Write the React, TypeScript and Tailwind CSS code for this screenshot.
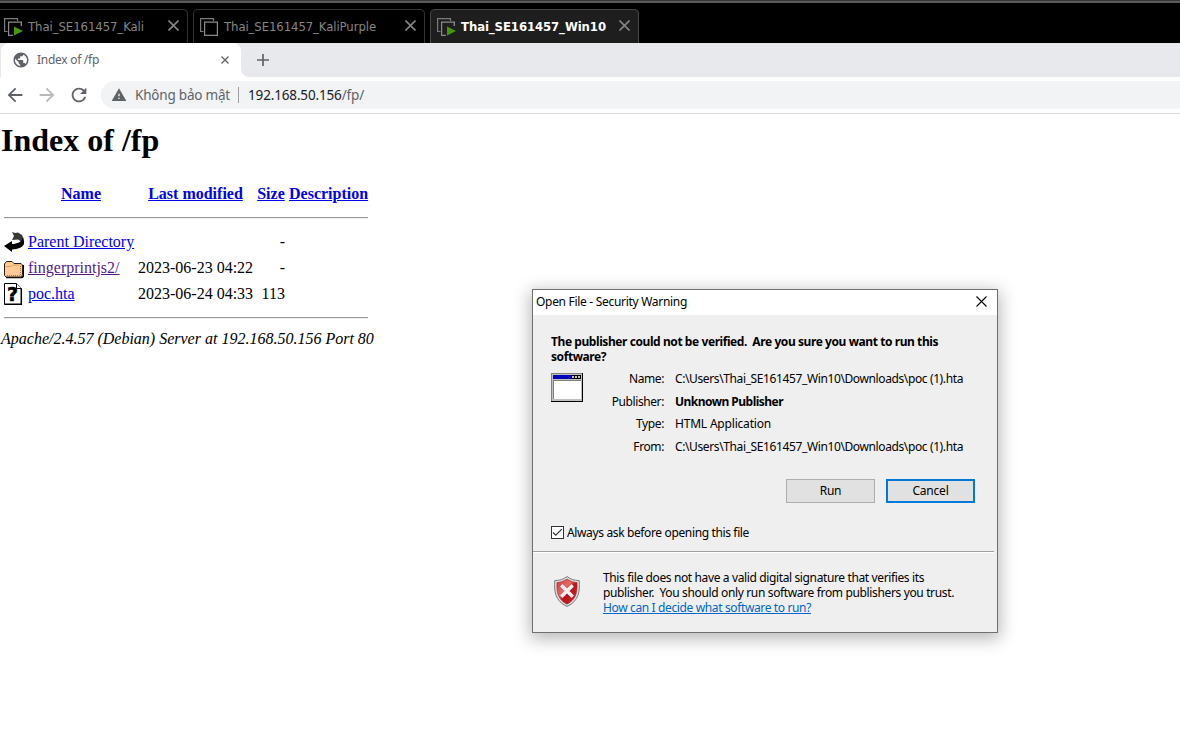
import type { ReactNode } from "react";
import { MdArrowBack, MdArrowForward, MdPublic, MdRefresh, MdWarning } from "react-icons/md";

function Cross({ className, size, stroke = 1.5 }: { className?: string; size: number; stroke?: number }) {
  return (
    <svg width={size} height={size} viewBox={`0 0 ${size} ${size}`} className={className}>
      <path d={`M0.5 0.5L${size - 0.5} ${size - 0.5}M${size - 0.5} 0.5L0.5 ${size - 0.5}`} stroke="currentColor" strokeWidth={stroke} fill="none" />
    </svg>
  );
}

function VmIcon({ running, active }: { running?: boolean; active?: boolean }) {
  const back = active ? "#1e1e1e" : "#000";
  return (
    <svg width="20" height="18" viewBox="0 0 20 18" className="shrink-0">
      <path d="M3.5 13.5H0.6V0.6H13.5V3" fill="none" stroke="#7a7a7a" strokeWidth="1.2" />
      <path d="M4.6 4.1H17.4V17.4H4.6Z" fill={back} stroke="#8a8a8a" strokeWidth="1.2" />
      {running && (
        <>
          <path d="M9 8H20V18H9Z" fill={back} />
          <path d="M17.4 4.1V8" stroke="#8a8a8a" strokeWidth="1.2" />
          <path d="M10 8.500L19 13L10 17.500Z" fill="#48960c" />
        </>
      )}
    </svg>
  );
}

function VmTab({ className, label, running, active, labelClass }: { className: string; label: string; running?: boolean; active?: boolean; labelClass: string }) {
  return (
    <div className={`flex h-[34px] shrink-0 items-center border-t border-r ${className}`}>
      <VmIcon running={running} active={active} />
      <span className={`ml-1 grow whitespace-pre ${labelClass}`}>{label}</span>
      <Cross size={11} className="mr-2 mb-[2px] shrink-0 text-[#858585]" stroke={1.6} />
    </div>
  );
}

function BackIcon() {
  return (
    <svg width="20" height="22" viewBox="0 0 20 22">
      <path d="M8 1L11 2L14 1.5L18 4L19.5 8L18 11L14 8.5L8 9L10 5Z" fill="#383838" />
      <path d="M0 15L8 10V13C13 13 18 11 19 6L20 10V13C18 17 14 18 8 18.5V21Z" fill="#000" />
    </svg>
  );
}

function FolderIcon() {
  return (
    <svg width="20" height="22" viewBox="0 0 20 22">
      <path d="M2 20.5H18L19.5 19V8" fill="none" stroke="#000" strokeWidth="1.6" />
      <path d="M0.5 7L2.5 4.5H8L10 6.5H17L18.5 8V18L17 20H2L0.5 18.5Z" fill="#fc9" stroke="#2b2118" />
      <path d="M1.5 9.5H7L9.5 8H17" fill="none" stroke="#e0a060" />
      <path d="M3 18.5H16.5V9" fill="none" stroke="#a8713c" strokeDasharray="1 1" />
    </svg>
  );
}

function UnknownIcon() {
  return (
    <svg width="20" height="22" viewBox="0 0 20 22">
      <path d="M0.5 0.5H12.5L17.5 5.5V21.5H0.5Z" fill="#fff" stroke="#000" />
      <path d="M12.5 0.5V5.5H17.5" fill="#fff" stroke="#000" />
      <path d="M1 21.3H17.3V6" fill="none" stroke="#000" strokeWidth="1.5" />
      <text x="8.6" y="17.5" textAnchor="middle" fontFamily="DejaVu Sans" fontWeight="bold" fontSize="19" stroke="#000" strokeWidth="0.6">?</text>
    </svg>
  );
}

function WindowIcon() {
  return (
    <svg width="32" height="29" viewBox="0 0 32 29" shapeRendering="crispEdges" className="mt-[5px]">
      <rect width="32" height="29" fill="#000" />
      <rect width="31" height="28" fill="#808080" />
      <rect x="1" y="1" width="30" height="27" fill="#c0c0c0" />
      <rect x="2" y="2" width="28" height="4" fill="#0000b8" />
      <path d="M21 2H30V6H21Z" fill="#000" />
      <path d="M21 3H23V5H21ZM24 3H26V5H24ZM27 3H29V5H27Z" fill="#c0c0c0" />
      <rect x="2" y="7" width="28" height="19" fill="#808080" />
      <rect x="3" y="8" width="27" height="18" fill="#fff" />
    </svg>
  );
}

function ShieldIcon() {
  return (
    <svg width="26" height="31" viewBox="0 0 26 31">
      <defs>
        <linearGradient id="shield" x1="0" y1="0" x2="1" y2="1">
          <stop offset="0" stopColor="#d63a3a" />
          <stop offset="0.4" stopColor="#e26a66" />
          <stop offset="0.55" stopColor="#b81419" />
          <stop offset="1" stopColor="#d02c2e" />
        </linearGradient>
      </defs>
      <path d="M13 0.5C16 3 20 4.5 25.2 4.6C26 15 25 25 13 30.5C1 25 0 15 0.8 4.6C6 4.5 10 3 13 0.5Z" fill="#dedede" stroke="#777b7b" />
      <path d="M13 3C16 5 19 6.3 23 6.6C23.5 15 22.5 23.5 13 28.2C3.500 23.5 2.500 15 3 6.600C7 6.300 10 5 13 3Z" fill="url(#shield)" stroke="#9c2226" strokeWidth="0.6" />
      <path d="M8.500 10.500L17.500 19.500M17.500 10.500L8.500 19.500" stroke="#f4f4f4" strokeWidth="3.400" strokeLinecap="square" />
    </svg>
  );
}

function Link({ children, className = "text-[#0000ee]" }: { children: ReactNode; className?: string }) {
  return <a className={`underline ${className}`}>{children}</a>;
}

const columns = "grid h-[26px] grid-cols-[20px_106px_115px_28px_79px] items-center gap-x-1 whitespace-nowrap";

function Row({ icon, children }: { icon: ReactNode; children: ReactNode }) {
  return (
    <div className={columns}>
      {icon}
      {children}
    </div>
  );
}

function Rule({ className }: { className: string }) {
  return <div className={`h-[2px] border-t border-b border-t-[#9a9a9a] border-b-[#eeeeee] ${className}`} />;
}

function Listing() {
  return (
    <main className="h-[634px] w-full bg-white pt-[8px] font-['Liberation_Serif',serif] text-[16px] leading-[18px] text-black">
      <h1 className="pl-px text-[32px] leading-[37px] font-bold">Index of /fp</h1>
      <div className="mt-[22px] ml-1 w-[364px]">
        <div className={`${columns} text-center font-bold`}>
          <span />
          <Link>Name</Link>
          <Link>Last modified</Link>
          <Link>Size</Link>
          <Link>Description</Link>
        </div>
        <Rule className="mt-[10px]" />
        <div className="mt-[10px]">
          <Row icon={<BackIcon />}>
            <Link>Parent Directory</Link>
            <span />
            <span className="text-right">-</span>
          </Row>
          <Row icon={<FolderIcon />}>
            <Link className="text-[#551a8b]">fingerprintjs2/</Link>
            <span>2023-06-23 04:22</span>
            <span className="text-right">-</span>
          </Row>
          <Row icon={<UnknownIcon />}>
            <Link>poc.hta</Link>
            <span>2023-06-24 04:33</span>
            <span className="text-right">113</span>
          </Row>
        </div>
        <Rule className="mt-[10px]" />
      </div>
      <address className="mt-[11px] pl-px italic">Apache/2.4.57 (Debian) Server at 192.168.50.156 Port 80</address>
    </main>
  );
}

function Dialog() {
  const file = "C:\\Users\\Thai_SE161457_Win10\\Downloads\\poc (1).hta";
  return (
    <section className="absolute top-[289px] left-[532px] h-[344px] w-[466px] border border-[#6f6f6f] bg-[#efefef] font-['Noto_Sans',sans-serif] text-[12px] leading-[15px] whitespace-pre text-black shadow-[0_4px_16px_2px_rgba(0,0,0,0.28)]">
      <header className="flex h-[25px] items-center justify-between bg-white pr-[10px] pb-[2px] pl-[3px]">
        <span className="tracking-[-0.3px]">Open File - Security Warning</span>
        <Cross size={11} stroke={1.1} />
      </header>
      <div className="h-[236px] pt-[19px] pr-[22px] pl-[18px]">
        <p className="font-bold tracking-[-0.423px]">{"The publisher could not be verified.  Are you sure you want to run this\nsoftware?"}</p>
        <div className="mt-[4px] flex">
          <WindowIcon />
          <div className="-mt-px grid auto-rows-[22.67px] grid-cols-[81px_1fr] items-center gap-x-[11px]">
            <span className="text-right tracking-[-0.4px]">Name:</span>
            <span className="tracking-[-0.384px]">{file}</span>
            <span className="pt-[2px] text-right tracking-[-0.4px]">Publisher:</span>
            <span className="pt-[2px] font-bold tracking-[-0.525px]">Unknown Publisher</span>
            <span className="text-right tracking-[-0.4px]">Type:</span>
            <span className="tracking-[-0.192px]">HTML Application</span>
            <span className="text-right tracking-[-0.4px]">From:</span>
            <span className="tracking-[-0.384px]">{file}</span>
          </div>
        </div>
        <div className="mt-[21px] flex justify-end gap-[11px]">
          <button className="h-[24px] w-[89px] border border-[#adadad] bg-[#e1e1e1] tracking-[-0.2px]">Run</button>
          <button className="h-[24px] w-[89px] border-2 border-[#0078d7] bg-[#e1e1e1] tracking-[-0.2px]">Cancel</button>
        </div>
        <label className="mt-[22px] flex items-center gap-[3px] tracking-[-0.363px]">
          <svg width="13" height="13" viewBox="0 0 13 13">
            <rect x="0.5" y="0.5" width="12" height="12" fill="#fff" stroke="#333" />
            <path d="M2 6.500L4.800 9.200L10.800 3.200" fill="none" stroke="#333" strokeWidth="1.200" />
          </svg>
          Always ask before opening this file
        </label>
      </div>
      <div className="mr-[3px] h-[2px] border-t border-b border-t-[#a0a0a0] border-b-white" />
      <footer className="flex pt-[17px] pl-[21px]">
        <div className="mt-[6px] w-[49px]"><ShieldIcon /></div>
        <div className="flex flex-col items-start">
          <span className="tracking-[-0.373px]">This file does not have a valid digital signature that verifies its</span>
          <span className="tracking-[-0.356px]">{"publisher.  You should only run software from publishers you trust."}</span>
          <a className="tracking-[-0.367px] text-[#0066cc] underline">How can I decide what software to run?</a>
        </div>
      </footer>
    </section>
  );
}

export default function App() {
  return (
    <div className="relative flex h-[748px] w-[1180px] flex-col overflow-hidden bg-white">
      <div className="h-[3px] border-t border-t-[#383838] bg-[#5c5c5c]" />
      <div className="flex h-[40px] items-start gap-[5px] overflow-hidden bg-black pt-[6px] font-['DejaVu_Sans_Condensed','DejaVu_Sans',sans-serif] text-[13px] leading-[18px]">
        <VmTab className="w-[188px] rounded-tr-[5px] border-[#333] pl-1" running label="Thai_SE161457_Kali" labelClass="tracking-[-0.069px] text-[#858585]" />
        <VmTab className="w-[232px] rounded-t-[5px] border-l border-[#333] pl-[6px]" label="Thai_SE161457_KaliPurple" labelClass="tracking-[-0.089px] text-[#858585]" />
        <VmTab className="w-[209px] rounded-t-[5px] border-l border-[#484848] bg-[#1e1e1e] pl-[6px]" running active label="Thai_SE161457_Win10" labelClass="font-bold tracking-[-0.09px] text-white" />
      </div>
      <div className="flex h-[34px] bg-white font-['Noto_Sans',sans-serif]">
        <div className="flex w-[241px] shrink-0 bg-[#e8e9ed]">
          <div className="ml-px flex grow items-center rounded-t-[8px] bg-white pr-[12px] pl-[11px] text-[12px] text-[#5f6368]">
            <MdPublic size={18} />
            <span className="ml-[7px] grow tracking-[-0.279px]">Index of /fp</span>
            <Cross size={8} stroke={1.4} />
          </div>
        </div>
        <div className="flex grow items-center rounded-bl-[8px] bg-[#e8e9ed] pl-[16px] text-[#5f6368]">
          <svg width="12" height="12" viewBox="0 0 12 12">
            <path d="M6 0V12M0 6H12" stroke="currentColor" strokeWidth="1.700" />
          </svg>
        </div>
      </div>
      <div className="flex h-[37px] shrink-0 items-center border-b border-[#dadce0] bg-white pl-[4px] font-['Noto_Sans',sans-serif] text-[13.5px] text-[#5f6368]">
        <MdArrowBack size={22} />
        <MdArrowForward size={22} className="ml-[10px] text-[#b8babd]" />
        <MdRefresh size={22} className="ml-[10px]" />
        <div className="ml-[11px] flex h-[28px] grow items-center rounded-l-full bg-[#f1f3f4] pl-[10px]">
          <MdWarning size={16} />
          <span className="ml-[8px] w-[103px] tracking-[-0.2px] whitespace-nowrap">Không bảo mật</span>
          <span className="h-[16px] w-px bg-[#9a9da1]" />
          <span className="ml-[9px] tracking-[-0.15px]"><span className="text-[#202124]">192.168.50.156</span>/fp/</span>
        </div>
      </div>
      <Listing />
      <Dialog />
    </div>
  );
}
